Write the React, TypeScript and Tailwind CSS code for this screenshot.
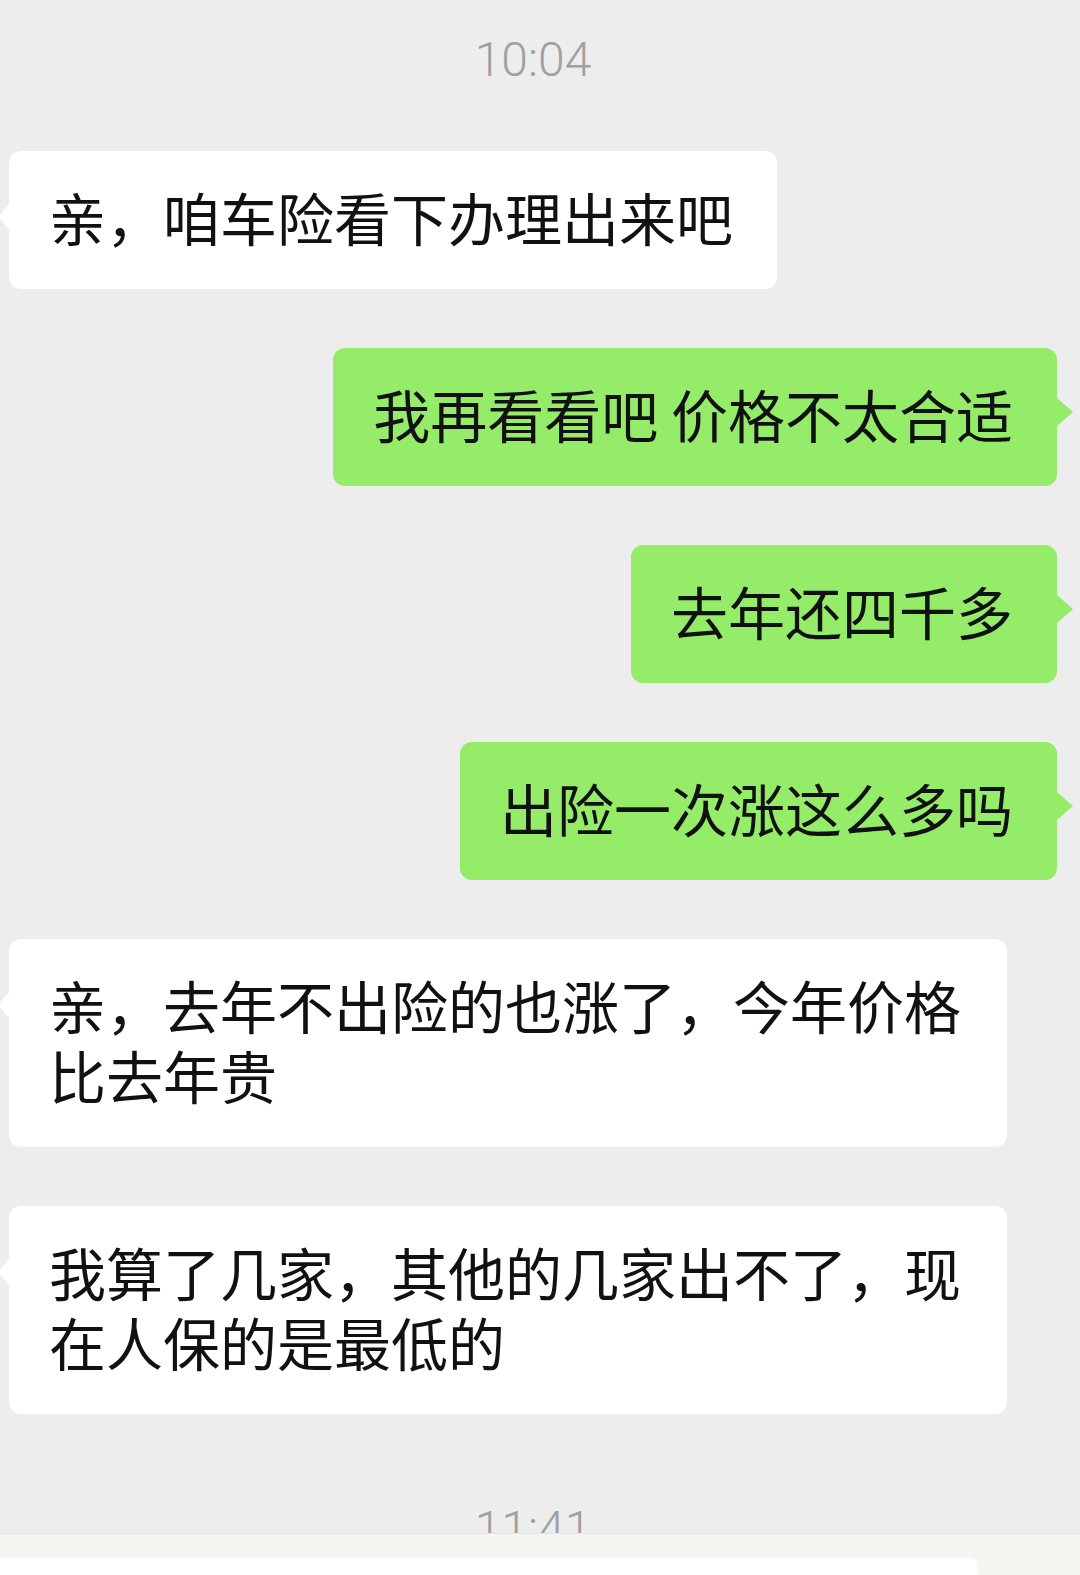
import React from "react";

type Msg = { side: "left" | "right"; text: string };

const messages: Msg[] = [
  { side: "left", text: "亲，咱车险看下办理出来吧" },
  { side: "right", text: "我再看看吧 价格不太合适" },
  { side: "right", text: "去年还四千多" },
  { side: "right", text: "出险一次涨这么多吗" },
  { side: "left", text: "亲，去年不出险的也涨了，今年价格比去年贵" },
  { side: "left", text: "我算了几家，其他的几家出不了，现在人保的是最低的" },
];

function TimeStamp({ time }: { time: string }) {
  return (
    <div className="flex h-[90px] items-center justify-center pr-[14px]">
      <span className="font-['Roboto',sans-serif] text-[48px] font-light leading-none text-[#a0a0a0]">{time}</span>
    </div>
  );
}

function Bubble({ msg }: { msg: Msg }) {
  const left = msg.side === "left";
  return (
    <div className={left ? "flex justify-start pl-[9px]" : "flex justify-end pr-[23px]"}>
      <div
        className={
          "relative max-w-[998px] rounded-[12px] pb-[38px] pl-[40px] pr-[44px] pt-[30px] text-[57px] leading-[70px] text-[#111] " +
          (left ? "bg-white" : "bg-[#95ec69]")
        }
      >
        {left ? (
          <span className="absolute left-[-11px] top-[52px] h-0 w-0 border-y-[14px] border-r-[12px] border-y-transparent border-r-white" />
        ) : (
          <span className="absolute right-[-16px] top-[50px] h-0 w-0 border-y-[14px] border-l-[16px] border-y-transparent border-l-[#95ec69]" />
        )}
        {msg.text}
      </div>
    </div>
  );
}

export default function App() {
  return (
    <div className="relative h-[1575px] w-[1080px] overflow-hidden bg-[#ededed] font-['Noto_Sans_CJK_SC','Noto_Sans',sans-serif]">
      <div className="pt-[15px]">
        <TimeStamp time="10:04" />
      </div>

      <div className="mt-[46px] flex flex-col gap-[59px]">
        {messages.map((m, i) => (
          <Bubble key={i} msg={m} />
        ))}
      </div>

      <div className="mt-[70px]">
        <TimeStamp time="11:41" />
      </div>

      {/* input bar, overlaps the last timestamp */}
      <div className="absolute bottom-0 left-0 right-0 h-[42px] border-t border-[#e2e4e0] bg-[#f4f6f2]">
        <div className="absolute bottom-0 left-0 h-[17px] w-[978px] rounded-tr-[8px] bg-white" />
      </div>
    </div>
  );
}
